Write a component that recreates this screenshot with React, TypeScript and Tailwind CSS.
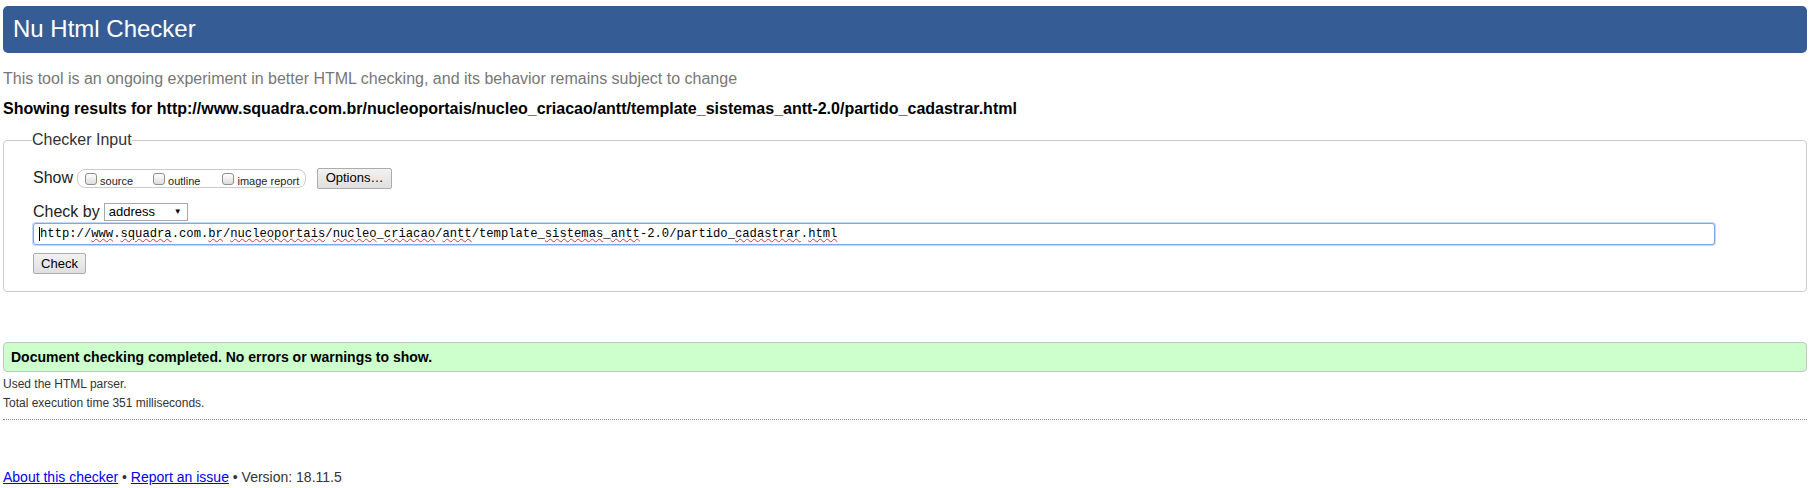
import React from 'react';

const URL_PARTS: { text: string; misspelled?: boolean }[] = [
  { text: 'http://' },
  { text: 'www', misspelled: true },
  { text: '.' },
  { text: 'squadra', misspelled: true },
  { text: '.com.' },
  { text: 'br', misspelled: true },
  { text: '/' },
  { text: 'nucleoportais', misspelled: true },
  { text: '/' },
  { text: 'nucleo', misspelled: true },
  { text: '_' },
  { text: 'criacao', misspelled: true },
  { text: '/' },
  { text: 'antt', misspelled: true },
  { text: '/template_' },
  { text: 'sistemas', misspelled: true },
  { text: '_' },
  { text: 'antt', misspelled: true },
  { text: '-2.0/partido_' },
  { text: 'cadastrar', misspelled: true },
  { text: '.' },
  { text: 'html', misspelled: true },
];

const FULL_URL = URL_PARTS.map((p) => p.text).join('');

function Checkbox() {
  return (
    <span className="inline-block w-[12px] h-[12px] rounded-[3px] border border-[#8f8f8f] bg-linear-to-b from-white to-[#dddddd] self-start mt-[2px]" />
  );
}

function OptionItem({ label, className }: { label: string; className: string }) {
  return (
    <span className={`flex items-center ${className}`}>
      <Checkbox />
      <span className="ml-[3px] text-[11px] leading-[14px] mt-[3px]">{label}</span>
    </span>
  );
}

export default function App() {
  return (
    <div className="min-h-[488px] bg-white pl-[3px] pr-[9px] pt-[6px] text-[#222] font-['Liberation_Sans',Arial,sans-serif]">
      {/* header */}
      <header className="h-[47px] rounded-[5px] bg-[#365c95] pl-[10px] pt-[9px]">
        <h1 className="text-[24px] leading-[28px] font-normal text-white">Nu Html Checker</h1>
      </header>

      <p className="mt-[17px] text-[16px] leading-[18px] text-[#777]">
        This tool is an ongoing experiment in better HTML checking, and its behavior remains subject to change
      </p>
      <p className="mt-[12px] text-[16px] leading-[18px] font-bold text-black">
        Showing results for {FULL_URL}
      </p>

      {/* checker input */}
      <fieldset className="mt-[13px] rounded-[4px] border border-[#cccccc] pl-[29px] pb-[17px]">
        <legend className="-ml-px text-[16px] leading-[18px] text-[#333]">Checker Input</legend>

        <div className="mt-[18px] flex h-[22px] items-center">
          <span className="text-[16px] leading-[18px] text-[#222]">Show</span>
          <div className="ml-[4px] flex h-[19px] w-[229px] items-start rounded-[8px] border border-[#cccccc] pt-[1px]">
            <OptionItem label="source" className="ml-[7px]" />
            <OptionItem label="outline" className="ml-[20px]" />
            <OptionItem label="image report" className="ml-[22px]" />
          </div>
          <button
            type="button"
            className="ml-[11px] h-[21px] w-[75px] rounded-[2px] border border-[#acacac] bg-linear-to-b from-[#f2f2f2] to-[#dfdfdf] text-[13px] leading-[16px] text-black"
          >
            Options…
          </button>
        </div>

        <div className="mt-[13px] flex h-[20px] items-center">
          <span className="text-[16px] leading-[18px] text-[#222]">Check by</span>
          <div className="ml-[4px] flex h-[18px] w-[84px] items-center justify-between border border-[#a9a9a9] bg-white pl-[4px] pr-[5px]">
            <span className="text-[13px] leading-[16px] text-black">address</span>
            <span className="text-[8px] leading-[10px] text-black">▼</span>
          </div>
        </div>

        <div className="mt-[1px] flex h-[22px] w-[1682px] items-center rounded-[3px] border border-[#7da7ee] shadow-[0_0_0_1px_#c3d6f6] bg-white pl-[5px]">
          <span className="h-[14px] w-px bg-black" />
          <span className="font-['Liberation_Mono','DejaVu_Sans_Mono',monospace] text-[12.2px] leading-[16px] text-black">
            {URL_PARTS.map((p, i) =>
              p.misspelled ? (
                <span
                  key={i}
                  className="underline decoration-wavy decoration-[#e0323c] decoration-1 underline-offset-[1px]"
                >
                  {p.text}
                </span>
              ) : (
                <span key={i}>{p.text}</span>
              ),
            )}
          </span>
        </div>

        <button
          type="button"
          className="mt-[8px] block h-[21px] w-[53px] rounded-[2px] border border-[#acacac] bg-linear-to-b from-[#f2f2f2] to-[#dfdfdf] text-[13px] leading-[16px] text-black"
        >
          Check
        </button>
      </fieldset>

      {/* result */}
      <div className="mt-[50px] flex h-[30px] items-center rounded-[4px] border border-[#c4c4c4] bg-[#ccffcc] pl-[7px]">
        <span className="text-[14px] leading-[16px] font-bold text-black">
          Document checking completed. No errors or warnings to show.
        </span>
      </div>

      <p className="mt-[3px] text-[12px] leading-[19px] text-[#333]">Used the HTML parser.</p>
      <p className="text-[12px] leading-[19px] text-[#333]">Total execution time 351 milliseconds.</p>

      <div className="mt-[6px] border-t border-dotted border-[#888]" />

      <footer className="mt-[48px] text-[14px] leading-[18px] text-[#333]">
        <a href="#about" className="text-[#0000ee] underline">About this checker</a>
        {' • '}
        <a href="#issue" className="text-[#0000ee] underline">Report an issue</a>
        {' • Version: 18.11.5'}
      </footer>
    </div>
  );
}
